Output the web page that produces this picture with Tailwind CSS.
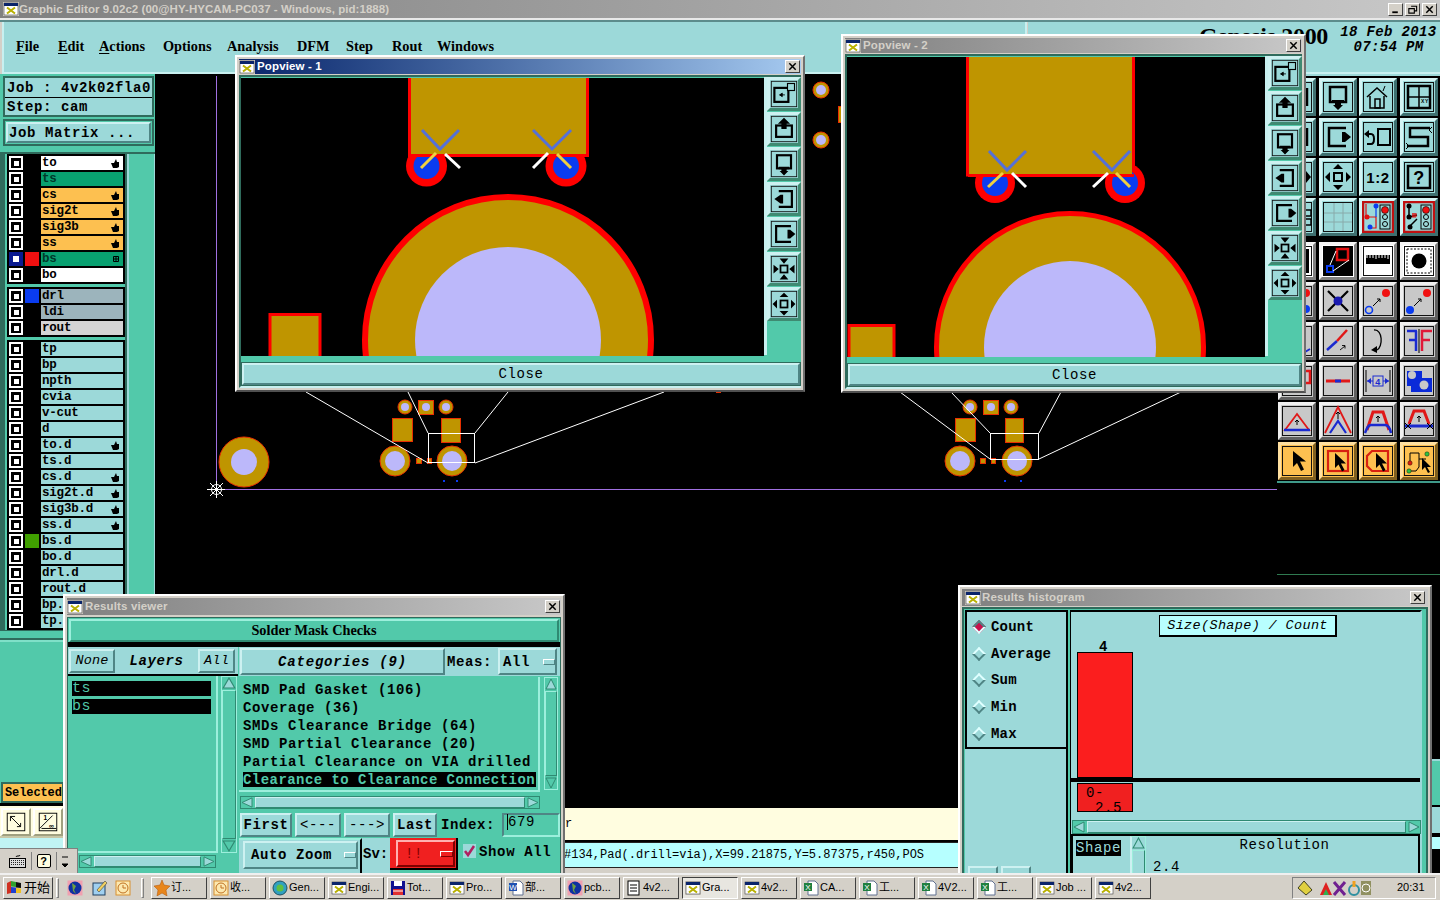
<!DOCTYPE html>
<html lang="en">
<head>
  <meta charset="UTF-8">
  <title>Graphic Editor 9.02c2</title>
  <script src="https://cdn.jsdelivr.net/npm/@tailwindcss/browser@4"></script>
</head>
<body class="bg-black">
<div class="relative w-[1440px] h-[900px] overflow-hidden bg-[#d4d0c8] font-['Liberation_Mono',monospace] font-bold text-[14px] leading-none tracking-[0.6px] text-black">

  <!-- main window title -->
  <div class="flex items-center h-[18px] pl-[3px] pr-[3px] bg-gradient-to-r from-[#808080] to-[#c8c8c8] font-['Liberation_Sans',sans-serif] text-[11.5px] tracking-[0.05px] text-[#d4d0c8]">
    <span class="xicon w-[16px] h-[14px]"></span>
    <span class="pt-[1px]">Graphic Editor 9.02c2 (00@HY-HYCAM-PC037 - Windows, pid:1888)</span>
    <div class="ml-auto flex gap-[2px] text-black">
      <span class="wbtn" data-i="min"></span><span class="wbtn" data-i="max"></span><span class="wbtn" data-i="x"></span>
    </div>
  </div>

  <div class="flex flex-col h-[855px] border-t-2 border-t-[#e8e8e8]">
    <!-- menu row -->
    <div class="flex h-[54px] border-t-2 border-t-[#5c8c8c] shrink-0">
      <div class="w-[1025px] ml-[2px] bg-[#9cd9d9] border-l-2 border-l-[#c8f0f0] border-b-2 border-b-[#c8f0f0] border-r-2 border-r-[#c8f0f0] flex items-end pb-[19px] font-['Liberation_Serif',serif] text-[14.3px] tracking-normal">
        <span class="ml-[12px] w-[42px]"><span class="underline decoration-1 underline-offset-2">F</span>ile</span>
        <span class="w-[41px]"><span class="underline decoration-1 underline-offset-2">E</span>dit</span>
        <span class="w-[64px]"><span class="underline decoration-1 underline-offset-2">A</span>ctions</span>
        <span class="w-[64px]">Options</span>
        <span class="w-[70px]">Analysis</span>
        <span class="w-[49px]">DFM</span>
        <span class="w-[46px]">Step</span>
        <span class="w-[45px]">Rout</span>
        <span>Windows</span>
      </div>
      <div class="flex-1 ml-[1px] bg-[#9cd9d9] flex border-b-2 border-b-[#c8f0f0]">
        <div class="ml-[171px] mt-[2px] w-[140px] font-['Liberation_Serif',serif] text-[24px] tracking-[-0.3px] whitespace-nowrap">Genesis 2000</div>
        <div class="mt-[3px] text-center italic text-[14px] tracking-[0.35px] leading-[15px] w-[99px]">
          <div class="whitespace-nowrap">18 Feb 2013</div>
          <div>07:54 PM</div>
        </div>
      </div>
    </div>

    <!-- work row -->
    <div class="flex flex-1 min-h-0">
      <!-- left panel -->
      <div class="w-[155px] shrink-0 flex flex-col bg-[#52c9aa]">
        <div class="mt-[2px] ml-[3px] w-[151px] h-[41px] border-2 border-[#2f6b5c] flex flex-col gap-[1px] bg-black">
          <div class="h-[19px] bg-[#9cd9d9] pl-[2px] pt-[1px] flex items-center whitespace-pre">Job : 4v2k02fla0</div>
          <div class="h-[17px] bg-[#9cd9d9] pl-[2px] pt-[1px] flex items-center whitespace-pre">Step: cam</div>
        </div>
        <div class="mt-[2px] ml-[3px] w-[151px] h-[27px] border-2 border-[#2f6b5c] p-[1px]">
          <div class="h-full border-2 border-t-[#cdf1f1] border-l-[#cdf1f1] border-r-[#4f8585] border-b-[#4f8585] bg-[#9cd9d9] pl-[1px] flex items-center whitespace-pre">Job Matrix ...</div>
        </div>
        <div class="mt-[6px] flex h-[478px] border-t-2 border-t-[#2f6b5c]">
          <div class="w-[5px] bg-[#2f6b5c]"></div>
          <div class="w-[2px]"></div>
          <div id="layers" class="w-[118px] flex flex-col text-[12.5px] tracking-[-0.2px]"></div>
          <div class="w-[2px] bg-[#2f6b5c]"></div>
          <div class="flex-1 border-l-2 border-l-[#9cd9d9] border-r border-r-[#9cd9d9]"></div>
        </div>
        <div class="h-[10px] border-b-2 border-b-[#2f6b5c] border-t border-t-[#2f6b5c]"></div>
        <div class="flex-1 border-t-2 border-t-[#7fe0c8]"></div>
        <div class="h-[21px] border-2 border-[#2f6b5c] ml-[1px] w-[63px] bg-[#fdc050] pl-[2px] flex items-center whitespace-nowrap text-[12px] tracking-[-0.1px]">Selected</div>
        <div class="h-[3px] bg-black"></div>
        <div class="h-[32px] bg-[#fffde0] flex gap-[2px] pl-[1px] pt-[2px] border-b-2 border-b-[#c8c8a8]">
          <span class="yb" data-i="a"></span><span class="yb" data-i="b"></span>
        </div>
        <div class="h-[35px] bg-[#c0f4f4]"></div>
      </div>

      <!-- canvas column -->
      <div class="relative flex-1 flex flex-col bg-black min-w-0">
        <div class="flex-1"></div>
        <div class="h-[32px] bg-[#fffde0] pl-[410px] pt-[10px] text-[12px] font-normal">r</div>
        <div class="h-[2px] bg-black"></div>
        <div class="h-[26px] bg-[#b6ffff] border-t border-b border-[#222] pl-[409px] flex items-center text-[12px] tracking-normal font-normal whitespace-nowrap">#134,Pad(.drill=via),X=99.21875,Y=5.87375,r450,POS</div>
        <div class="h-[5px] bg-[#d4d0c8]"></div>
      </div>

      <!-- right column -->
      <div class="w-[163px] shrink-0 flex flex-col bg-black">
        <div class="h-[2px] bg-[#9cd9d9]"></div>
        <div id="tools" class="grid grid-cols-4 gap-[2px] w-[160px] ml-[1px] pt-[2px] pb-[1px]"></div>
        <div class="h-[2px] bg-[#3f9a8a]"></div>
        <div class="h-[92px] border-b border-b-[#2f7a50]"></div>
        <div class="flex-1 flex justify-end">
          <div class="w-[8px] mt-[184px] flex flex-col">
            <div class="h-[46px] bg-[#52c9aa] border-t-2 border-t-[#9cd9d9]"></div>
            <div class="h-[2px] bg-black"></div>
            <div class="h-[26px] bg-[#9cd9d9]"></div>
            <div class="h-[12px] bg-[#b6ffff] mt-[4px]"></div>
          </div>
        </div>
      </div>
    </div>
  </div>

  <!-- taskbar -->
  <div id="taskbar" class="relative z-30 flex items-center h-[27px] border-t-2 border-t-[#f0f0f0] bg-[#d4d0c8] font-['Liberation_Sans','Noto_Sans_CJK_SC',sans-serif] font-normal text-[11px] tracking-normal"></div>

  <!-- board drawn on the editor canvas -->
  <svg class="absolute left-[155px] top-[74px] z-0" width="1122" height="734" viewBox="155 74 1122 734">
    <path d="M216.5 76V489.5H1277" fill="none" stroke="#a070e0"/>
    <g stroke="#fff" fill="none"><path d="M207 489.500h18M216.500 481v17M210 483l13 13M223 483l-13 13"/><circle cx="216.500" cy="489.500" r="5"/></g>
    <g id="pads"></g>
    <g fill="none" stroke="#fff">
      <path d="M306 392L428 463M408 392L428 433M508 392L475 433M664 392L475 463"/>
      <rect x="428.500" y="433.500" width="46" height="29"/>
      <path d="M900 392L990 459M951 392L990 433M1061 392L1039 433M1181 392L1039 459"/>
      <rect x="990.500" y="433.500" width="48" height="26"/>
    </g>
  </svg>

  <!-- Popview 1 -->
  <div class="absolute z-10 left-[235px] top-[55px] w-[570px] h-[337px] bg-[#d4d0c8] border-2 border-t-white border-l-white border-r-[#707070] border-b-[#505050] p-[2px] flex flex-col">
    <div class="h-[15px] shrink-0 flex items-center pr-[1px] bg-gradient-to-r from-[#0a246a] to-[#a6caf0] font-['Liberation_Sans',sans-serif] text-[11.5px] tracking-[0.15px] text-white">
      <span class="xicon w-[16px] h-[14px] mr-[2px]"></span><span>Popview - 1</span>
      <span class="wbtn ml-auto" data-i="x"></span>
    </div>
    <div class="flex-1 mt-[1px] bg-[#52c9aa] border-2 border-r-0 border-t-[#2f6b5c] border-l-[#2f6b5c] border-b-[#c8f0f0] flex flex-col">
      <div class="flex h-[285px] shrink-0">
        <div class="relative w-[523px] shrink-0 mt-[1px] h-[278px] bg-black overflow-hidden">
          <svg width="523" height="278" viewBox="241 79 523 278"><use href="#pop1art"/></svg>
        </div>
        <div class="w-[3px] h-[278px] bg-[#c8f0f0]"></div>
        <div class="popt w-[34px] flex flex-col gap-[1px]"></div>
      </div>
      <div class="flex-1 p-[1px] bg-[#2f6b5c]">
        <div class="h-full border-2 border-t-[#cdf1f1] border-l-[#cdf1f1] border-r-[#4f8585] border-b-[#4f8585] bg-[#9cd9d9] font-normal flex items-center justify-center">Close</div>
      </div>
    </div>
  </div>

  <!-- Popview 2 -->
  <div class="absolute z-10 left-[841px] top-[34px] w-[465px] h-[359px] bg-[#d4d0c8] border-2 border-t-white border-l-white border-r-[#707070] border-b-[#505050] p-[2px] flex flex-col">
    <div class="h-[15px] shrink-0 flex items-center pr-[1px] bg-gradient-to-r from-[#808080] to-[#c8c8c8] font-['Liberation_Sans',sans-serif] text-[11.5px] tracking-[0.15px] text-[#d4d0c8]">
      <span class="xicon w-[16px] h-[14px] mr-[2px]"></span><span>Popview - 2</span>
      <span class="wbtn ml-auto" data-i="x"></span>
    </div>
    <div class="flex-1 mt-[1px] bg-[#52c9aa] border-2 border-r-0 border-t-[#2f6b5c] border-l-[#2f6b5c] border-b-[#c8f0f0] flex flex-col">
      <div class="flex h-[307px] shrink-0">
        <div class="relative w-[418px] shrink-0 mt-[1px] h-[300px] bg-black overflow-hidden">
          <svg width="418" height="300" viewBox="847 58 418 300"><use href="#pop2art"/></svg>
        </div>
        <div class="w-[3px] h-[300px] bg-[#c8f0f0]"></div>
        <div class="popt w-[34px] flex flex-col gap-[1px]"></div>
      </div>
      <div class="flex-1 p-[1px] bg-[#2f6b5c]">
        <div class="h-full border-2 border-t-[#cdf1f1] border-l-[#cdf1f1] border-r-[#4f8585] border-b-[#4f8585] bg-[#9cd9d9] font-normal flex items-center justify-center">Close</div>
      </div>
    </div>
  </div>

  <!-- Results viewer, its lower edge runs under the taskbar -->
  <div class="absolute z-20 left-[63px] top-[594px] w-[502px] h-[300px] bg-[#d4d0c8] border-2 border-t-white border-l-white border-r-[#707070] border-b-[#505050] p-[2px] flex flex-col overflow-hidden">
    <div class="h-[17px] shrink-0 flex items-center pr-[1px] bg-gradient-to-r from-[#808080] to-[#c8c8c8] font-['Liberation_Sans',sans-serif] text-[11.5px] tracking-[0.15px] text-[#d4d0c8]">
      <span class="xicon w-[16px] h-[14px] mr-[2px]"></span><span>Results viewer</span>
      <span class="wbtn ml-auto" data-i="x"></span>
    </div>
    <div class="flex-1 mt-[2px] min-h-0 bg-[#52c9aa] border border-[#2f6b5c] flex flex-col">
      <div class="h-[23px] shrink-0 mx-[1px] mt-[1px] border-2 border-t-[#9cefdc] border-l-[#9cefdc] border-r-[#2f8a72] border-b-[#2f8a72] flex items-center justify-center font-['Liberation_Serif',serif] text-[14.3px] tracking-normal">Solder Mask Checks</div>
      <div class="h-[5px] bg-black shrink-0"></div>
      <div class="flex flex-1 min-h-0">
        <!-- layers column -->
        <div class="w-[170px] shrink-0 flex flex-col mr-[1px]">
          <div class="h-[29px] shrink-0 flex bg-[#9cd9d9] items-center px-[1px] pr-[3px] gap-[3px] border-b-2 border-b-black">
            <div class="w-[46px] h-[24px] border-2 border-t-[#cdf1f1] border-l-[#cdf1f1] border-r-[#4f8585] border-b-[#4f8585] flex items-center justify-center font-normal italic text-[13.500px] tracking-[0.2px]">None</div>
            <div class="flex-1 flex items-center justify-center italic">Layers</div>
            <div class="w-[37px] h-[24px] border-2 border-t-[#cdf1f1] border-l-[#cdf1f1] border-r-[#4f8585] border-b-[#4f8585] flex items-center justify-center font-normal italic text-[13.500px] tracking-[0.2px]">All</div>
          </div>
          <div class="flex h-[179px] shrink-0">
            <div class="w-[150px] h-[177px] border-r-2 border-r-[#9cefdc] border-b-2 border-b-[#9cefdc] pt-[5px] pl-[4px] pr-[5px] flex flex-col gap-[3px] font-normal text-[#52c9aa] text-[15px]">
              <div class="h-[15px] bg-black flex items-center">ts</div>
              <div class="h-[15px] bg-black flex items-center">bs</div>
            </div>
            <div class="vbar w-[16px] h-[177px] ml-[3px]"></div>
          </div>
          <div class="hbar h-[13px] w-[137px] ml-[11px] shrink-0"></div>
        </div>
        <!-- categories column -->
        <div class="flex-1 min-w-0 flex flex-col">
          <div class="h-[29px] shrink-0 flex bg-[#9cd9d9] items-center">
            <div class="w-[205px] h-[27px] ml-[1px] border-2 border-t-[#cdf1f1] border-l-[#cdf1f1] border-r-[#4f8585] border-b-[#4f8585] flex items-center justify-center italic tracking-[0.8px]">Categories (9)</div>
            <div class="w-[52px] pl-[2px]">Meas:</div>
            <div class="w-[59px] h-[27px] ml-[1px] border-2 border-t-[#cdf1f1] border-l-[#cdf1f1] border-r-[#4f8585] border-b-[#4f8585] flex items-center pl-[3px] whitespace-pre">All <span class="w-[14px] h-[6px] ml-[4px] border border-t-white border-l-white border-r-[#4f8585] border-b-[#4f8585]"></span></div>
          </div>
          <div class="flex h-[115px] shrink-0 mt-[1px]">
            <div class="w-[301px] border-r-2 border-r-[#9cefdc] border-b-2 border-b-[#9cefdc] pt-[4px] pl-[4px] flex flex-col whitespace-pre overflow-hidden">
              <div class="h-[18px] flex items-center">SMD Pad Gasket (106)</div>
              <div class="h-[18px] flex items-center">Coverage (36)</div>
              <div class="h-[18px] flex items-center">SMDs Clearance Bridge (64)</div>
              <div class="h-[18px] flex items-center">SMD Partial Clearance (20)</div>
              <div class="h-[18px] flex items-center">Partial Clearance on VIA drilled</div>
              <div class="h-[15px] mt-[1px] w-[293px] bg-black text-[#52c9aa] flex items-center whitespace-nowrap tracking-[0.45px]">Clearance to Clearance Connection</div>
            </div>
            <div class="vbar w-[14px] h-[113px] ml-[4px]"></div>
          </div>
          <div class="hbar h-[13px] w-[300px] ml-[1px] mt-[4px] shrink-0"></div>
          <div class="h-[25px] mt-[3px] shrink-0 flex items-center gap-[3px] pl-[1px] text-[14px]">
            <div class="w-[52px] h-[24px] border-2 border-t-[#cdf1f1] border-l-[#cdf1f1] border-r-[#4f8585] border-b-[#4f8585] bg-[#9cd9d9] flex items-center justify-center">First</div>
            <div class="w-[46px] h-[24px] border-2 border-t-[#cdf1f1] border-l-[#cdf1f1] border-r-[#4f8585] border-b-[#4f8585] bg-[#9cd9d9] flex items-center justify-center font-normal">&lt;---</div>
            <div class="w-[46px] h-[24px] border-2 border-t-[#cdf1f1] border-l-[#cdf1f1] border-r-[#4f8585] border-b-[#4f8585] bg-[#9cd9d9] flex items-center justify-center font-normal">---&gt;</div>
            <div class="w-[44px] h-[24px] border-2 border-t-[#cdf1f1] border-l-[#cdf1f1] border-r-[#4f8585] border-b-[#4f8585] bg-[#9cd9d9] flex items-center justify-center">Last</div>
            <div class="w-[59px] pl-[1px]">Index:</div>
            <div class="w-[58px] h-[24px] border-2 border-t-[#4f8585] border-l-[#4f8585] border-r-[#9cefdc] border-b-[#9cefdc] pl-[3px] font-normal">
              <span class="border-l border-l-black">679</span>
            </div>
          </div>
          <div class="flex flex-1 mt-[1px]">
            <div class="w-[123px] bg-[#9cd9d9] border-t-2 border-t-[#9cefdc] border-r-2 border-r-black pl-[4px] pt-[1px]">
              <div class="w-[115px] h-[28px] border-2 border-t-[#cdf1f1] border-l-[#cdf1f1] border-r-[#4f8585] border-b-[#4f8585] flex items-center pl-[6px] whitespace-pre">Auto Zoom <span class="w-[14px] h-[6px] ml-[3px] border border-t-white border-l-white border-r-[#4f8585] border-b-[#4f8585]"></span></div>
            </div>
            <div class="w-[28px] bg-[#9cd9d9] pt-[9px] pl-[1px] tracking-normal">Sv:</div>
            <div class="w-[68px] h-[32px] bg-[#f02020] border-b-2 border-b-black border-r-2 border-r-black pt-[2px] pl-[6px]">
              <div class="w-[59px] h-[27px] border-2 border-t-[#ffb0b0] border-l-[#ffb0b0] border-r-[#800000] border-b-[#800000] flex items-center pl-[7px] font-normal text-[#800000] whitespace-pre">!! <span class="w-[14px] h-[6px] ml-[8px] border border-t-white border-l-white border-r-[#800000] border-b-[#800000]"></span></div>
            </div>
            <div class="flex items-start pt-[6px] pl-[5px]">
              <svg width="13" height="14" viewBox="0 0 13 14"><rect width="13" height="14" fill="#9cd9d9"/><path d="M2 7l3 4 6-9" fill="none" stroke="#b02060" stroke-width="2.5"/></svg>
              <span class="ml-[3px] mt-[1px] tracking-[0.65px]">Show All</span>
            </div>
          </div>
        </div>
      </div>
    </div>
  </div>

  <!-- Results histogram, also runs under the taskbar -->
  <div class="absolute z-20 left-[958px] top-[585px] w-[474px] h-[310px] bg-[#d4d0c8] border-2 border-t-white border-l-white border-r-[#707070] border-b-[#505050] p-[2px] flex flex-col overflow-hidden">
    <div class="h-[17px] shrink-0 flex items-center pl-[3px] pr-[3px] bg-gradient-to-r from-[#808080] to-[#c8c8c8] font-['Liberation_Sans',sans-serif] text-[11.5px] tracking-[0.15px] text-[#d4d0c8]">
      <span class="xicon w-[16px] h-[14px] mr-[1px]"></span><span>Results histogram</span>
      <span class="wbtn ml-auto" data-i="x"></span>
    </div>
    <div class="flex-1 mt-[1px] min-h-0 bg-[#52c9aa] border-2 border-[#2f6b5c] p-[1px] flex gap-[1px]">
      <div class="w-[103px] shrink-0 bg-[#9cd9d9] border-r-2 border-r-black relative">
        <div class="h-[139px] w-[101px] border-2 border-black pt-[2px] pl-[5px] flex flex-col gap-0 border-r-0">
          <div class="h-[27px] flex items-center"><span class="w-[10px] h-[10px] ml-[2px] rotate-45 bg-[#c8104c] border-2 border-t-[#4f8585] border-l-[#4f8585] border-r-[#e0ffff] border-b-[#e0ffff]"></span><span class="ml-[7px] tracking-[0.2px]">Count</span></div>
          <div class="h-[27px] flex items-center"><span class="w-[10px] h-[10px] ml-[2px] rotate-45 border-2 border-t-[#e0ffff] border-l-[#e0ffff] border-r-[#4f8585] border-b-[#4f8585]"></span><span class="ml-[7px] tracking-[0.2px]">Average</span></div>
          <div class="h-[27px] flex items-center"><span class="w-[10px] h-[10px] ml-[2px] rotate-45 border-2 border-t-[#e0ffff] border-l-[#e0ffff] border-r-[#4f8585] border-b-[#4f8585]"></span><span class="ml-[7px] tracking-[0.2px]">Sum</span></div>
          <div class="h-[27px] flex items-center"><span class="w-[10px] h-[10px] ml-[2px] rotate-45 border-2 border-t-[#e0ffff] border-l-[#e0ffff] border-r-[#4f8585] border-b-[#4f8585]"></span><span class="ml-[7px] tracking-[0.2px]">Min</span></div>
          <div class="h-[27px] flex items-center"><span class="w-[10px] h-[10px] ml-[2px] rotate-45 border-2 border-t-[#e0ffff] border-l-[#e0ffff] border-r-[#4f8585] border-b-[#4f8585]"></span><span class="ml-[7px] tracking-[0.2px]">Max</span></div>
        </div>
        <div class="absolute left-[3px] top-[256px] flex gap-[3px]">
          <div class="w-[30px] h-[12px] border-2 border-t-[#cdf1f1] border-l-[#cdf1f1] border-r-[#4f8585]"></div>
          <div class="w-[30px] h-[12px] border-2 border-t-[#cdf1f1] border-l-[#cdf1f1] border-r-[#4f8585]"></div>
        </div>
      </div>
      <div class="w-[352px] shrink-0 flex flex-col bg-[#9cd9d9] border-t-2 border-t-black ml-[1px] border-l border-l-black border-r-2 border-r-[#9cd9d9]">
        <div class="relative h-[170px] border-b-[4px] border-b-black shrink-0 pl-[5px]">
          <div class="absolute left-[88px] top-[3px] w-[178px] h-[22px] bg-[#b8ffff] border border-black border-r-2 border-b-2 flex items-center justify-center italic font-normal text-[13.500px] tracking-[0.35px] whitespace-pre">Size(Shape) / Count</div>
          <div class="absolute left-[28px] top-[28px]">4</div>
          <div class="absolute left-[6px] top-[40px] w-[56px] h-[126px] bg-[#fb1e1e] border border-black"></div>
        </div>
        <div class="relative h-[38px] shrink-0">
          <div class="ml-[6px] mt-[1px] w-[56px] h-[29px] bg-[#f02020] border border-black font-normal leading-[15px] pt-[2px]">
            <div class="pl-[8px]">0-</div>
            <div class="pl-[17px]">2.5</div>
          </div>
        </div>
        <div class="hbar h-[14px] ml-[1px] w-[349px] shrink-0"></div>
        <div class="flex-1 border-t-2 border-t-black border-r-2 border-r-black border-l-2 border-l-black flex">
          <div class="w-[57px] pl-[3px] pt-[5px]"><span class="bg-black text-[#9cd9d9] font-normal">Shape</span></div>
          <div class="vbar w-[16px] h-[60px] border-l-2 border-l-[#cdf1f1]"></div>
          <div class="flex-1 flex flex-col">
            <div class="text-center pt-[2px] pl-[5px] font-normal tracking-[0.6px] h-[24px]">Resolution</div>
            <div class="pl-[7px] font-normal">2.4</div>
          </div>
        </div>
      </div>
    </div>
  </div>

  <svg width="0" height="0" class="absolute">
    <defs>
      <g id="pop1art">
        <rect x="409.500" y="70" width="178" height="86.500" fill="#bf9500" stroke="#f00" stroke-width="3"/>
        <circle cx="426.500" cy="167" r="20.500" fill="#f00"/><circle cx="426.500" cy="167" r="13" fill="#0a3cf0"/>
        <circle cx="566" cy="167" r="20.500" fill="#f00"/><circle cx="566" cy="167" r="13" fill="#0a3cf0"/>
        <rect x="411" y="80" width="175" height="75" fill="#bf9500"/>
        <path d="M411 156.500H586" stroke="#f00" stroke-width="3"/>
        <path d="M422 131L440 150L459 131M533 131L552 150L571 131" fill="none" stroke="#5570d8" stroke-width="3"/>
        <path d="M421 169L436 154" stroke="#f0d040" stroke-width="3"/><path d="M445 155L460 169" stroke="#fff" stroke-width="3"/>
        <path d="M533 169L548 154" stroke="#fff" stroke-width="3"/><path d="M557 155L571 169" stroke="#f0d040" stroke-width="3"/>
        <circle cx="508" cy="341" r="143" fill="#bf9500" stroke="#f00" stroke-width="6"/>
        <circle cx="508" cy="341" r="93" fill="#bcb8fa"/>
        <rect x="270" y="315.500" width="50" height="60" fill="#bf9500" stroke="#f00" stroke-width="3"/>
      </g>
      <g id="pop2art">
        <rect x="967.500" y="50" width="166" height="126" fill="#bf9500" stroke="#f00" stroke-width="3"/>
        <circle cx="995" cy="184" r="20" fill="#f00"/><circle cx="995" cy="184" r="13" fill="#0a3cf0"/>
        <circle cx="1125" cy="184" r="20" fill="#f00"/><circle cx="1125" cy="184" r="13" fill="#0a3cf0"/>
        <rect x="969" y="58" width="163" height="117" fill="#bf9500"/>
        <path d="M968 176.500H1134" stroke="#f00" stroke-width="3"/>
        <path d="M989 152L1007 171L1026 152M1093 152L1112 171L1130 152" fill="none" stroke="#5570d8" stroke-width="3"/>
        <path d="M988 188L1003 174" stroke="#f0d040" stroke-width="3"/><path d="M1012 174L1026 188" stroke="#fff" stroke-width="3"/>
        <path d="M1093 188L1108 174" stroke="#fff" stroke-width="3"/><path d="M1116 174L1130 188" stroke="#f0d040" stroke-width="3"/>
        <circle cx="1070" cy="348" r="133.500" fill="#bf9500" stroke="#f00" stroke-width="5"/>
        <circle cx="1070" cy="348" r="86" fill="#bcb8fa"/>
        <rect x="849" y="326.500" width="45" height="50" fill="#bf9500" stroke="#f00" stroke-width="3"/>
      </g>
    </defs>
  </svg>

  <!-- floating keyboard bar -->
  <div class="absolute z-20 left-0 top-[848px] w-[78px] h-[25px] bg-[#d4d0c8] border-t border-r border-[#808080] flex items-center gap-[5px] pl-[9px]">
    <svg width="17" height="14" viewBox="0 0 17 14"><path d="M7 3c0-2 4 0 4-2" fill="none" stroke="#000"/><rect x=".5" y="4.500" width="16" height="9" fill="#ddd" stroke="#000"/><path d="M2 6.500h13M2 8.500h13M2 10.500h13" stroke="#222" stroke-dasharray="1 1"/></svg>
    <span class="w-px h-[18px] bg-[#808080]"></span>
    <span class="w-[14px] h-[14px] border border-black rounded-[2px] text-[11px] flex items-center justify-center bg-[#fffde0] font-['Liberation_Sans',sans-serif]">?</span>
    <span class="w-px h-[18px] bg-[#808080]"></span>
    <svg width="6" height="14" viewBox="0 0 6 14"><path d="M0 3h6M0 10h6l-3 3z" stroke="#000" fill="#000"/></svg>
  </div>
</div>

<script>
// window title bar bits
var xsvg = '<svg width="100%" height="100%" viewBox="0 0 16 14"><rect width="16" height="14" fill="#d4d0c8"/><rect x="1" y="1" width="14" height="12" fill="#fff" stroke="#404040" stroke-width=".6"/><rect x="1" y="1" width="14" height="3" fill="#0a246a"/><path d="M4 5.500l8 6M12 5.500l-8 6" stroke="#b8b000" stroke-width="2"/></svg>';
document.querySelectorAll('.xicon').forEach(function (el) { el.innerHTML = xsvg; el.style.display = 'inline-block'; });
var wicons = {
  min: '<path d="M3 9h6" stroke="#000" stroke-width="2"/>',
  max: '<path d="M5 2.500h6v5h-2M2.500 5h6v5h-6z" fill="none" stroke="#000" stroke-width="1.200"/>',
  x: '<path d="M3 2.500l7 7M10 2.500l-7 7" stroke="#000" stroke-width="1.600"/>'
};
document.querySelectorAll('.wbtn').forEach(function (el) {
  el.className += ' w-[15px] h-[13px] bg-[#d4d0c8] border border-t-white border-l-white border-r-[#404040] border-b-[#404040] flex items-center justify-center';
  el.innerHTML = '<svg width="13" height="11" viewBox="0 0 13 12">' + wicons[el.dataset.i] + '</svg>';
});

// layer list
var hand = '<svg class="ml-auto mr-[4px]" width="8" height="9" viewBox="0 0 8 9"><path d="M0 4l3 0 2-4 1 3h2v5l-2 1H2z"/></svg>';
var boxed = '<svg class="ml-auto mr-[4px]" width="6" height="6" viewBox="0 0 6 6"><path d="M.500 .500h5v5h-5zM3 .500v5M.500 3h5" fill="none" stroke="#000"/></svg>';
function row(name, bg, sw, mark, sel) {
  var box = sel ? 'w-[14px] h-[14px] bg-[#0a1a90] flex items-center justify-center' : 'w-[14px] h-[14px] bg-white flex items-center justify-center';
  var inner = sel ? '<span class="w-[6px] h-[6px] bg-white"></span>' : '<span class="w-[10px] h-[10px] bg-black flex items-center justify-center"><span class="w-[5px] h-[5px] bg-white"></span></span>';
  return '<div class="flex h-[14px] mb-[2px] ml-[2px]">' +
    '<span class="' + box + '">' + inner + '</span>' +
    '<span class="w-[14px] h-[14px] ml-[2px] mr-[2px] ' + (sw || '') + '"></span>' +
    '<span class="w-[82px] h-[14px] pl-[1px] flex items-center ' + bg + '">' + name + (mark || '') + '</span></div>';
}
var W = 'bg-white', G = 'bg-[#08a070] text-[#00382a]', O = 'bg-[#fdc050]', S = 'bg-[#9cb4bc]', L = 'bg-[#d4d4d4]', T = 'bg-[#9cd9d9]';
var g1 = row('to', W, '', hand) + row('ts', G) + row('cs', O, '', hand) + row('sig2t', O, '', hand) + row('sig3b', O, '', hand) + row('ss', O, '', hand) + row('bs', G, 'bg-[#f01010]', boxed, true) + row('bo', W);
var g2 = row('drl', S, 'bg-[#0a3cf0]') + row('ldi', S) + row('rout', L);
var names = ['tp', 'bp', 'npth', 'cvia', 'v-cut', 'd', 'to.d', 'ts.d', 'cs.d', 'sig2t.d', 'sig3b.d', 'ss.d', 'bs.d', 'bo.d', 'drl.d', 'rout.d', 'bp.', 'tp.'];
var g3 = names.map(function (n) {
  return row(n, T, n == 'bs.d' ? 'bg-[#40a000]' : '', /^(to|cs|sig2t|sig3b|ss)\.d$/.test(n) ? hand : '');
}).join('');
document.getElementById('layers').innerHTML =
  '<div class="bg-black pt-[2px] h-[130px] shrink-0">' + g1 + '</div><div class="h-[3px] shrink-0"></div>' +
  '<div class="bg-black pt-[2px] h-[50px] shrink-0">' + g2 + '</div><div class="h-[3px] shrink-0"></div>' +
  '<div class="bg-black pt-[2px] flex-1">' + g3 + '</div>';

// board pads under the popups
function pad(x, y, r1, r2) {
  return '<circle cx="' + x + '" cy="' + y + '" r="' + r1 + '" fill="#bf9500" stroke="#e83000"/><circle cx="' + x + '" cy="' + y + '" r="' + r2 + '" fill="#bcb8fa"/>';
}
function rct(x, y, w, h) {
  return '<rect x="' + x + '.5" y="' + y + '.5" width="' + w + '" height="' + h + '" fill="#bf9500" stroke="#e83000"/>';
}
document.getElementById('pads').innerHTML =
  pad(244, 462, 25, 13) + pad(395, 461, 15, 10) + pad(452, 461, 15, 10) + pad(405, 407, 7, 4) + pad(446, 407, 7, 4) +
  rct(418, 400, 15, 14) + '<circle cx="426" cy="407" r="4" fill="#bcb8fa"/>' + rct(392, 418, 20, 23) + rct(441, 418, 19, 24) + rct(416, 458, 5, 5) + rct(427, 458, 4, 5) +
  pad(960, 461, 15, 10) + pad(1017, 461, 15, 10) + pad(970, 407, 7, 4) + pad(1011, 407, 7, 4) +
  rct(983, 400, 15, 14) + '<circle cx="991" cy="407" r="4" fill="#bcb8fa"/>' + rct(955, 418, 20, 23) + rct(1005, 418, 18, 24) + rct(980, 458, 5, 5) + rct(991, 458, 4, 5) +
  pad(821, 90, 8, 5) + pad(821, 140, 8, 5) + rct(838, 106, 3, 16) + rct(716, 390, 4, 2) +
  '<path d="M443 481h2M456 481h2M1004 481h2M1020 481h2" stroke="#0a3cf0" stroke-width="2"/>';

// toolbar buttons
var B = 'fill="none" stroke="#000" stroke-width="2.500"';
var icons = {
  down: '<rect x="8" y="6" width="16" height="15" ' + B + '/><path d="M10 19h12v3h-3v2h2l-5 5-5-5h2v-2h-3z"/>',
  house: '<path d="M5 16L15 7l10 9M8 15v12h14V15" fill="none" stroke="#000" stroke-width="1.500"/><rect x="13" y="18" width="5" height="9" fill="none" stroke="#000" stroke-width="1.500"/><path d="M21 10l2-5" stroke="#000"/>',
  xy: '<rect x="5" y="5" width="22" height="22" ' + B + '/><path d="M5 16h22M16 5v22" stroke="#000" stroke-width="1.500"/><text x="18" y="22" font-size="5" font-family="Liberation Sans">XY</text>',
  right: '<path d="M24 7H7v18h17" ' + B + '/><path d="M20 11l3 0 6 5-6 5h-3z"/>',
  undo: '<rect x="16" y="8" width="12" height="16" fill="none" stroke="#000" stroke-width="2"/><path d="M5 13h4c4 0 4 10 0 10H5" fill="none" stroke="#000" stroke-width="2"/><path d="M2 13l5-4v8z"/>',
  s: '<path d="M27 7H7v9h18v9H4" fill="none" stroke="#000" stroke-width="2.500"/><path d="M29 6l-3 3 3 3M3 22l3 3-3 3" fill="none" stroke="#000"/>',
  pan: '<rect x="12" y="12" width="8" height="8" fill="none" stroke="#000" stroke-width="2"/><path d="M16 3l5 5H11zM16 29l5-5H11zM3 16l5-5v10zM29 16l-5-5v10z"/>',
  pani: '<rect x="12" y="12" width="8" height="8" fill="none" stroke="#000" stroke-width="2"/><path d="M16 10l5-6H11zM16 22l5 6H11zM10 16L4 11v10zM22 16l6-5v10z"/>',
  ratio: '<text x="16" y="22" text-anchor="middle" font-size="15" font-family="Liberation Sans" font-weight="bold">1:2</text>',
  help: '<rect x="5" y="5" width="22" height="22" ' + B + '/><text x="16" y="23" text-anchor="middle" font-size="18" font-family="Liberation Sans" font-weight="bold">?</text>',
  grid: '<path d="M2 12h28M2 21h28M12 2v28M21 2v28" stroke="#8aa"/>',
  net1: '<path d="M4 3v13h10v11h-7M4 16h5" fill="none" stroke="#e01010" stroke-width="1.200"/><path d="M14 3v13" stroke="#0a3cf0" stroke-width="1.200"/><circle cx="14" cy="5" r="2.500" fill="#0a3cf0"/><circle cx="5" cy="16" r="2.500" fill="#e01010"/><circle cx="8" cy="26" r="2.500" fill="#0a3cf0"/>',
  net2: '<path d="M6 3v13M6 16l8-2M6 26l8-8" stroke="#000" stroke-width="1.500"/><circle cx="6" cy="5" r="2.500"/><circle cx="6" cy="16" r="2.500"/><circle cx="7" cy="26" r="2.500"/><path d="M9 13h5M9 15h5M10 12v5M12 12v5" stroke="#e01010"/>',
  light: '<rect x="18" y="4" width="10" height="24" fill="none" stroke="#000"/><circle cx="23" cy="9" r="3.500" fill="#f01010" stroke="#000" stroke-width=".6"/><circle cx="23" cy="16" r="2.500" fill="none" stroke="#000"/><circle cx="23" cy="23" r="2.500" fill="none" stroke="#000"/>',
  conn: '<rect x="1" y="1" width="30" height="30"/><rect x="15" y="4" width="11" height="11" fill="none" stroke="#e01010" stroke-width="2.500"/><rect x="5" y="21" width="6" height="6" fill="none" stroke="#0a3cf0" stroke-width="2"/><path d="M14 6L8 20M27 15L11 26" stroke="#fff"/>',
  rule: '<rect x="4" y="10" width="24" height="9"/><path d="M5 10v3M8 10v3M11 10v3M14 10v4M17 10v3M20 10v3M23 10v3M26 10v4" stroke="#fff"/>',
  dot: '<rect x="4" y="4" width="24" height="24" fill="none" stroke="#000" stroke-dasharray="2 1.500"/><circle cx="16" cy="16" r="7.500"/>',
  xb: '<path d="M6 6l20 20M26 6L6 26" stroke="#000" stroke-width="2.200"/><circle cx="16" cy="16" r="4.500" fill="#1a1ab0"/>',
  hole: '<circle cx="7" cy="25" r="3.500" fill="none" stroke="#0a3cf0" stroke-width="1.600"/><circle cx="24" cy="8" r="4" fill="#f01010"/><path d="M11 21l7-7M15 14h3v3" fill="none" stroke="#000"/>',
  solid: '<circle cx="7" cy="25" r="4" fill="#0a3cf0"/><circle cx="24" cy="8" r="4" fill="#f01010"/><path d="M11 21l7-7M15 14h3v3" fill="none" stroke="#000"/>',
  line: '<path d="M5 25L15 16" stroke="#1a2ad0" stroke-width="2.500"/><path d="M15 16L25 5" stroke="#e01818" stroke-width="2.500"/><path d="M18 25l5-4M20 20.500h3v3" fill="none" stroke="#000" stroke-width=".9"/>',
  curve: '<path d="M12 5c9-1 9 17 3 20" fill="none" stroke="#000" stroke-width="1.300"/><path d="M9 25l6-4v7z"/>',
  mirror: '<path d="M14 6H4M13 15H6M13 6v20" fill="none" stroke="#1a2ad0" stroke-width="2.500"/><path d="M16 4v24" stroke="#000"/><path d="M19 26V6h10M19 15h8" fill="none" stroke="#e01838" stroke-width="2.500"/>',
  bar: '<path d="M4 16h24" stroke="#e01818" stroke-width="3"/><path d="M13 16h6" stroke="#1a2ad0" stroke-width="3"/>',
  width: '<path d="M4 5v22M28 5v22" stroke="#000"/><path d="M5 16h22" stroke="#1a2ad0"/><path d="M5 16l4-3v6zM27 16l-4-3v6z" fill="#1a2ad0"/><rect x="11" y="11" width="10" height="10" fill="#c8c8c8" stroke="#1a2ad0"/><text x="16" y="20" text-anchor="middle" font-size="9" fill="#1a2ad0" font-family="Liberation Sans">4</text>',
  blob: '<path d="M4 6h15v7h10v14H8v-6H4z" fill="#0a2ad8"/><circle cx="9" cy="10" r="4" fill="#c8c8c8"/><circle cx="21" cy="20" r="4.500" fill="#c8c8c8"/>',
  tri: '<path d="M16 9L4 25h24z" fill="none" stroke="#e01818" stroke-width="1.800"/><path d="M3 25h26" stroke="#1a2ad0" stroke-width="2.500"/><path d="M16 20v-5M14 17l2-2 2 2" fill="none" stroke="#000"/>',
  tri2: '<path d="M3 28L16 2l13 26" fill="none" stroke="#e01818" stroke-width="1.800"/><path d="M8 28l8-12 8 12" fill="none" stroke="#1a2ad0" stroke-width="2.200"/><path d="M16 14V7M14 9l2-2 2 2" fill="none" stroke="#000"/>',
  trap: '<path d="M5 25l6-18h10l6 18" fill="none" stroke="#e01818" stroke-width="3"/><path d="M3 28c2-5 3-8 6-8h14c3 0 5 3 6 8" fill="none" stroke="#1a2ad0" stroke-width="2.500"/><path d="M16 17v-6M14 13l2-2 2 2" fill="none" stroke="#000"/>',
  trapx: '<path d="M6 19l5-13h10l5 13" fill="none" stroke="#e01818" stroke-width="3"/><path d="M2 21h28" stroke="#1a2ad0" stroke-width="3"/><path d="M2 18l6 6M8 18l-6 6M24 18l6 6M30 18l-6 6" stroke="#000"/><path d="M16 17v-6M14 13l2-2 2 2" fill="none" stroke="#000"/>',
  arrow: '<path d="M12 6l0 16 4-4 4 8 3-1.500-4-8h6z"/>',
  arsq: '<rect x="6" y="6" width="20" height="20" fill="none" stroke="#d82010" stroke-width="2.200"/><path d="M13 8l0 15 3.500-3.500 3.500 7 2.500-1.500-3.500-6.500h5z"/>',
  aroct: '<path d="M10 6h16v20H10L5 21V11z" fill="none" stroke="#d82010" stroke-width="2.200"/><path d="M14 8l0 15 3.500-3.500 3.500 7 2.500-1.500-3.500-6.500h5z"/>',
  arnet: '<path d="M7 20V8h9v14l-3 4H7M16 14h7" fill="none" stroke="#000"/><circle cx="7" cy="18" r="2.200" fill="#d82010" stroke="#000" stroke-width=".4"/><circle cx="6" cy="26" r="2.200" fill="#30c040" stroke="#000" stroke-width=".4"/><circle cx="24" cy="9" r="2.200" fill="#30c040" stroke="#000" stroke-width=".4"/><path d="M19 13l0 12 3-3 3 6 2-1-3-5h4z"/>',
  up: '<rect x="7" y="12" width="18" height="13" ' + B + '/><path d="M16 3l7 7h-4v6h-6v-6H9z"/>',
  left: '<path d="M10 7h15v18H10" ' + B + '/><path d="M15 11h-3l-7 5 7 5h3z"/>',
  copy: '<rect x="5" y="9" width="16" height="16" ' + B + '/><rect x="20" y="4" width="8" height="8" fill="#9cd9d9" stroke="#000" stroke-width="1.300"/><path d="M17 17h-6M11 17l3-2v4z" stroke="#000"/>',
  // right-hand ends of the first column, the rest sits under Popview 2
  c1a: '<path d="M26 7v18" stroke="#000" stroke-width="2.500"/>',
  c1b: '<path d="M25 10l5 6-5 6z"/>',
  c1c: '<rect x="24" y="9" width="6" height="6" fill="none" stroke="#000" stroke-width="1.500"/><rect x="24" y="18" width="6" height="6" fill="none" stroke="#000" stroke-width="1.500"/>',
  c1d: '<rect x="2" y="4" width="26" height="24" fill="#000"/>',
  c1e: '<circle cx="25" cy="8" r="4" fill="#f01010"/><circle cx="25" cy="24" r="4" fill="#0a3cf0"/>',
  c1f: '<path d="M24 27l5-3" stroke="#1a2ad0" stroke-width="2"/>',
  c1g: '<rect x="22" y="6" width="7" height="12" fill="none" stroke="#e01818" stroke-width="2.500"/>'
};
// kinds: all class strings written out so the stylesheet picks them up
var kinds = {
  t: 'bg-[#9cd9d9] border-t-[#d4f4f4] border-l-[#d4f4f4] border-r-[#3f7070] border-b-[#3f7070]',
  g: 'bg-[#c8c8c8] border-t-[#f0f0f0] border-l-[#f0f0f0] border-r-[#606060] border-b-[#606060]',
  w: 'bg-white border-t-[#f4f4f4] border-l-[#f4f4f4] border-r-[#808080] border-b-[#808080]',
  o: 'bg-[#fdc050] border-t-[#ffe0a0] border-l-[#ffe0a0] border-r-[#806020] border-b-[#806020]',
  r: 'bg-[#9cd9d9] border-t-[#d4f4f4] border-l-[#d4f4f4] border-r-[#3f7070] border-b-[#3f7070]'
};
function tool(kind, name) {
  var frame = kind == 'r'
    ? '<rect x="1" y="1" width="30" height="30" fill="none" stroke="#c01010" stroke-width="2.500"/>'
    : '<rect x="1.500" y="1.500" width="29" height="29" fill="none" stroke="#111"/>';
  var art = icons[name] || '';
  if (kind == 'r') art += icons.light;
  return '<div class="w-[38px] h-[38px] border-[3px] ' + kinds[kind] + '"><svg width="32" height="32" viewBox="0 0 32 32">' + frame + art + '</svg></div>';
}
var layout = [
  ['t', 'c1a', 't', 'down', 't', 'house', 't', 'xy'],
  ['t', 'c1a', 't', 'right', 't', 'undo', 't', 's'],
  ['t', 'c1b', 't', 'pan', 't', 'ratio', 't', 'help'],
  ['t', 'c1c', 't', 'grid', 'r', 'net1', 'r', 'net2'],
  ['w', 'c1d', 'w', 'conn', 'w', 'rule', 'w', 'dot'],
  ['g', 'c1e', 'g', 'xb', 'g', 'hole', 'g', 'solid'],
  ['g', 'c1f', 'g', 'line', 'g', 'curve', 'g', 'mirror'],
  ['g', 'c1g', 'g', 'bar', 'g', 'width', 'g', 'blob'],
  ['g', 'tri', 'g', 'tri2', 'g', 'trap', 'g', 'trapx'],
  ['o', 'arrow', 'o', 'arsq', 'o', 'aroct', 'o', 'arnet']
];
var html = '';
layout.forEach(function (r, n) {
  for (var i = 0; i < 8; i += 2) html += tool(r[i], r[i + 1]);
  if (n == 3) html += '<div class="col-span-4 h-[2px]"></div>';
});
document.getElementById('tools').innerHTML = html;

document.querySelectorAll('.popt').forEach(function (el) {
  el.innerHTML = ['copy', 'up', 'down', 'left', 'right', 'pani', 'pan'].map(function (n) {
    return '<div class="w-[34px] h-[34px] border-[3px] bg-[#9cd9d9] border-t-[#cdf1f1] border-l-[#cdf1f1] border-r-[#3f8a72] border-b-[#3f8a72]"><svg width="28" height="28" viewBox="0 0 32 32"><rect x="1.500" y="1.500" width="29" height="29" fill="none" stroke="#111"/>' + icons[n] + '</svg></div>';
  }).join('');
});

// yellow mini buttons
var yicons = {
  a: '<rect x="3.500" y="3.500" width="19" height="19" fill="none" stroke="#000"/><path d="M7 7l11 11M7 7v5M7 7h5M18 18v-4M18 18h-4" fill="none" stroke="#000"/>',
  b: '<rect x="3.500" y="3.500" width="19" height="19" fill="none" stroke="#000"/><path d="M4 20L18 6M6 20h16" fill="none" stroke="#000"/><text x="8" y="11" font-size="7" font-family="Liberation Sans">1</text><text x="14" y="19" font-size="7" font-family="Liberation Sans">∞</text>'
};
document.querySelectorAll('.yb').forEach(function (el) {
  el.className = 'w-[30px] h-[28px] border-2 border-t-white border-l-white border-r-[#a0a080] border-b-[#a0a080]';
  el.innerHTML = '<svg width="26" height="24" viewBox="0 0 26 26">' + yicons[el.dataset.i] + '</svg>';
});

// scrollbars
document.querySelectorAll('.vbar').forEach(function (el) {
  el.className += ' flex flex-col border-[1px] border-[#9cefdc] shrink-0';
  el.innerHTML = '<svg class="w-full h-[12px] shrink-0" viewBox="0 0 12 12" preserveAspectRatio="none"><path d="M6 1l5 10H1z" fill="#9cd9d9" stroke="#2f8a72"/></svg>' +
    '<div class="flex-1 my-[1px] min-h-0 border border-t-[#9cefdc] border-l-[#9cefdc] border-r-[#2f8a72] border-b-[#2f8a72]"></div>' +
    '<svg class="w-full h-[12px] shrink-0" viewBox="0 0 12 12" preserveAspectRatio="none"><path d="M6 11l5-10H1z" fill="#52c9aa" stroke="#2f8a72"/></svg>';
});
document.querySelectorAll('.hbar').forEach(function (el) {
  el.className += ' flex border-[1px] border-[#2f8a72] bg-[#52c9aa]';
  el.innerHTML = '<svg class="h-full w-[12px] shrink-0" viewBox="0 0 12 12" preserveAspectRatio="none"><path d="M1 6l10-5v10z" fill="#9cd9d9" stroke="#2f8a72"/></svg>' +
    '<div class="flex-1 mx-[2px] border border-t-[#cdf1f1] border-l-[#cdf1f1] border-r-[#2f8a72] border-b-[#2f8a72] bg-[#9cd9d9]"></div>' +
    '<svg class="h-full w-[12px] shrink-0" viewBox="0 0 12 12" preserveAspectRatio="none"><path d="M11 6L1 1v10z" fill="#9cd9d9" stroke="#2f8a72"/></svg>';
});

// taskbar
var ticons = {
  x: xsvg,
  star: '<svg width="16" height="16" viewBox="0 0 16 16"><path d="M8 0l2 5 6 1-4 4 1 6-5-3-5 3 1-6-4-4 6-1z" fill="#e8861c" stroke="#b05000" stroke-width=".5"/></svg>',
  clock: '<svg width="16" height="16" viewBox="0 0 16 16"><rect x="1" y="1" width="14" height="14" fill="#fce8b0" stroke="#d89030"/><circle cx="8" cy="8" r="5" fill="none" stroke="#c07020"/><path d="M8 5v3h3" fill="none" stroke="#c07020"/></svg>',
  gen: '<svg width="16" height="16" viewBox="0 0 16 16"><circle cx="8" cy="8" r="7" fill="#30a0c0" stroke="#205060"/><circle cx="8" cy="8" r="3.500" fill="#60c040"/></svg>',
  disk: '<svg width="16" height="16" viewBox="0 0 16 16"><rect x="1" y="1" width="14" height="14" fill="#101090"/><rect x="4" y="1" width="8" height="5" fill="#fff"/><rect x="3" y="9" width="10" height="6" fill="#e03030"/><path d="M3 11h10" stroke="#fff"/></svg>',
  word: '<svg width="16" height="16" viewBox="0 0 16 16"><path d="M5 1h7l3 3v11H5z" fill="#fff" stroke="#607090"/><rect x="1" y="3" width="8" height="8" fill="#2050b0"/><text x="5" y="10" text-anchor="middle" font-size="8" fill="#fff" font-family="Liberation Sans">W</text></svg>',
  xl: '<svg width="16" height="16" viewBox="0 0 16 16"><path d="M5 1h7l3 3v11H5z" fill="#fff" stroke="#607090"/><rect x="1" y="3" width="8" height="8" fill="#208040"/><text x="5" y="10" text-anchor="middle" font-size="8" fill="#fff" font-family="Liberation Sans">X</text></svg>',
  globe: '<svg width="16" height="16" viewBox="0 0 16 16"><rect x=".5" y=".5" width="15" height="15" fill="#f0a0b0"/><circle cx="8" cy="8" r="6.500" fill="#1030a0"/><path d="M5 3l4 3-2 4 2 4-3-3z" fill="#70a040"/></svg>',
  note: '<svg width="16" height="16" viewBox="0 0 16 16"><rect x="2" y="1" width="11" height="14" fill="#fff" stroke="#000"/><path d="M4 5h7M4 8h7M4 11h7" stroke="#000"/></svg>',
  pen: '<svg width="16" height="16" viewBox="0 0 16 16"><rect x="1" y="3" width="12" height="12" fill="#a0d0f0" stroke="#204060"/><path d="M5 10l8-9 2 2-8 9z" fill="#f0d060" stroke="#404040" stroke-width=".6"/></svg>'
};
function tbtn(icon, label, active) {
  var cls = active
    ? 'bg-[#e8e6e0] border-t-[#404040] border-l-[#404040] border-r-white border-b-white'
    : 'border-t-white border-l-white border-r-[#404040] border-b-[#404040]';
  return '<div class="w-[56px] h-[22px] mr-[3px] shrink-0 border ' + cls + ' flex items-center pl-[2px] gap-[1px] overflow-hidden whitespace-nowrap"><span class="w-[16px] h-[16px] shrink-0 inline-block">' + ticons[icon] + '</span>' + label + '</div>';
}
var sep = '<span class="w-[3px] h-[20px] mx-[3px] border border-t-white border-l-white border-r-[#808080] border-b-[#808080] shrink-0"></span>';
var tb = '<div class="ml-[3px] w-[50px] h-[22px] shrink-0 border border-t-white border-l-white border-r-[#404040] border-b-[#404040] flex items-center pl-[2px] gap-[1px]">' +
  '<svg class="shrink-0" width="17" height="15" viewBox="0 0 17 15"><path d="M1 3l4-2v12l-4 1z" fill="#d03020"/><path d="M5 1l5 1v5l-5-.5z" fill="#30a030"/><path d="M5 7l5 .5V13l-5 0z" fill="#2040d0"/><path d="M10 2l5 1v5l-5-.5z" fill="#111"/><path d="M10 8l5 .5V13l-5 0z" fill="#f0c020"/></svg><span class="text-[13px]">开始</span></div>' + sep +
  '<span class="w-[16px] h-[16px] ml-[5px] shrink-0">' + ticons.globe + '</span><span class="w-[16px] h-[16px] ml-[9px] shrink-0">' + ticons.pen + '</span><span class="w-[16px] h-[16px] ml-[7px] shrink-0">' + ticons.clock + '</span><span class="w-[7px]"></span>' + sep + '<span class="w-[4px]"></span>';
var items = [['star', '订...'], ['clock', '收...'], ['gen', 'Gen...'], ['x', 'Engi...'], ['disk', 'Tot...'], ['x', 'Pro...'], ['word', '部...'], ['globe', 'pcb...'], ['note', '4v2...'], ['x', 'Gra...', 1], ['x', '4v2...'], ['xl', 'CA...'], ['xl', '工...'], ['xl', '4V2...'], ['xl', '工...'], ['x', 'Job ...'], ['x', '4v2...']];
tb += items.map(function (it) { return tbtn(it[0], it[1], it[2]); }).join('');
tb += '<div class="ml-auto mr-[4px] w-[144px] h-[22px] border border-t-[#808080] border-l-[#808080] border-r-white border-b-white flex items-center pl-[3px]">' +
  '<svg width="76" height="16" viewBox="0 0 76 16"><path d="M2 8l6-7 8 9-6 5z" fill="#e0d040" stroke="#404020"/><path d="M24 15l6-13 6 13z" fill="#e02020"/><path d="M27 15l3-6 3 6z" fill="#30b050"/><path d="M38 2l11 13M49 2L38 15" stroke="#702090" stroke-width="3"/><circle cx="58" cy="10" r="5" fill="none" stroke="#3090a0" stroke-width="2"/><path d="M58 1v6" stroke="#f0a020" stroke-width="3"/><rect x="65" y="1" width="10" height="14" fill="#909060"/><circle cx="70" cy="8" r="4" fill="none" stroke="#fff"/></svg>' +
  '<span class="ml-[25px]">20:31</span></div>';
document.getElementById('taskbar').innerHTML = tb;
</script>
</body>
</html>
